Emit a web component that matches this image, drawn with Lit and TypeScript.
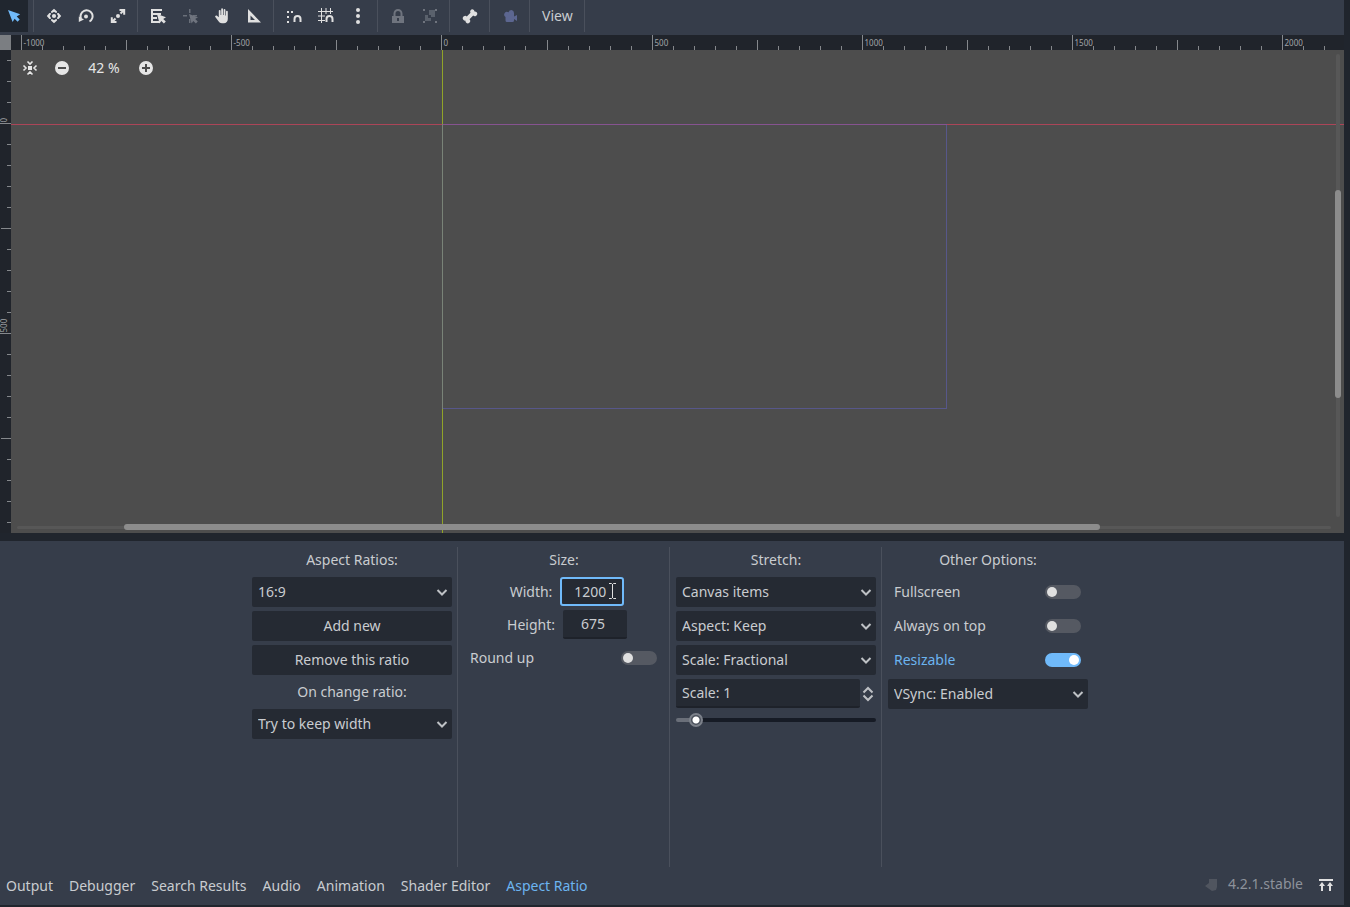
import { LitElement, html, css, svg } from "lit";
import { customElement, property, state } from "lit/decorators.js";
import { classMap } from "lit/directives/class-map.js";

const cursor = svg`<path d="M7 6 16 9.3 13.2 11 15.8 13.6 13.9 15.5 11.3 12.9 9.6 15.5z"/>`;
const magnet = svg`<path d="M8.500 14V11a3 3 0 0 1 6 0v3" fill="none" stroke="currentColor" stroke-width="2"/>`;

const icons: Record<string, unknown> = {
  select: svg`<path d="M2 2 14.2 6.3 10.7 8.6 13.7 11.6 11.6 13.7 8.6 10.7 6.6 14z"/>`,
  move: svg`<circle cx="8" cy="8" r="2.100"/><path d="M8 .8 11 3.400v1.400H9.400L8 3.800 6.600 4.800H5V3.400zM8 15.200 5 12.600v-1.400h1.600L8 12.200l1.400-1H11v1.400zM.8 8 3.400 5h1.400v1.600L3.800 8l1 1.400V11H3.400zM15.200 8 12.600 11h-1.400V9.400l1-1.400-1-1.400V5h1.400z"/>`,
  rotate: svg`<circle cx="8" cy="8.500" r="2"/><path d="M3 10.500A6 6 0 1 1 11.500 13.500" fill="none" stroke="currentColor" stroke-width="2"/><path d="M.8 8.500v5.500l5.200-2.500z"/>`,
  scale: svg`<circle cx="8" cy="8" r="2"/><path d="M9.500 2h4.700v4.700M10.500 5.500l3-3M6.500 14H1.800V9.300M5.500 10.500l-3 3" fill="none" stroke="currentColor" stroke-width="2"/>`,
  list: svg`<path d="M1 1h11v2H3v2h8v2H3v2h4v2H3v2h7v2H1z"/>${cursor}`,
  pivot: svg`<path d="M7 1h1.500v4H7zM1 7h4v1.500H1zM7 11h1.500v4H7zM11 7h4v1.200h-4z" opacity=".9"/>${cursor}`,
  hand: svg`<path d="M7.200 1.200a.9.9 0 0 1 1.800 0V7h.6V1.900a.9.9 0 0 1 1.800 0V7.400h.6V3.700a.9.9 0 0 1 1.800 0V11c0 2.600-1.600 4.200-4 4.200H8c-1.700 0-2.700-.7-3.500-2L1.300 8.900c-.6-1 .7-2 1.700-1.200L4.800 9.200V2.800a.9.9 0 0 1 1.800 0V7h.6z"/>`,
  ruler: svg`<path fill-rule="evenodd" d="M2 1v13.500h13zM4.500 7.500 9 12H4.500z"/>`,
  snap: svg`<path d="M1 3h2v2H1zM5 3h2v2H5zM1 8h2v2H1zM1 13h2v2H1z"/>${magnet}`,
  grid: svg`<path d="M3.500 0v15M8 0v6M12.500 0v6M0 3.500h15M0 8h7M0 12.500h7" fill="none" stroke="currentColor"/>${magnet}`,
  dots: svg`<circle cx="8" cy="2" r="2"/><circle cx="8" cy="8" r="2"/><circle cx="8" cy="14" r="2"/>`,
  lock: svg`<path fill-rule="evenodd" d="M2 8h1.500V5.500a4.500 4.500 0 0 1 9 0V8H14v7H2zM5.500 8h5V5.500a2.500 2.500 0 0 0-5 0zM7 10v3h2v-3z"/>`,
  group: svg`<path d="M1 1h2v2H1zM13 1h2v2h-2zM1 13h2v2H1zM13 13h2v2h-2z"/><path d="M7 2h6v7H9V7H7zM3 7h3v3h3v3H3z" opacity=".65"/>`,
  bone: svg`<path d="M10.500 1.200a2.400 2.400 0 0 0-2 3.600L4.800 8.500a2.400 2.400 0 1 0-1.300 4.100 2.400 2.400 0 1 0 4-1.300l3.700-3.700a2.400 2.400 0 1 0 1.300-4.100 2.400 2.400 0 0 0-2-2.300z"/>`,
  camera: svg`<path d="M9.500 2a3 3 0 0 0-2.900 2.300A2.700 2.700 0 1 0 3.500 9v3.500A1.500 1.500 0 0 0 5 14h5.500a1.500 1.500 0 0 0 1.500-1.500V11l3 2V7l-3 1.500V5A3 3 0 0 0 9.500 2z"/>`,
  center: svg`<path d="M6 6h4v4H6z"/><path d="M5.500 1.500 8 4l2.500-2.500M5.500 14.500 8 12l2.500 2.500M1.500 5.500 4 8l-2.500 2.500M14.500 5.500 12 8l2.500 2.500" fill="none" stroke="currentColor" stroke-width="1.600"/>`,
  minus: svg`<path fill-rule="evenodd" d="M8 1a7 7 0 1 0 0 14A7 7 0 1 0 8 1zM4 7h8v2H4z"/>`,
  plus: svg`<path fill-rule="evenodd" d="M8 1a7 7 0 1 0 0 14A7 7 0 1 0 8 1zM7 4h2v3h3v2H9v3H7V9H4V7h3z"/>`,
  spinner: svg`<path d="M3.500 6.500 8 2l4.500 4.500M3.500 9.500 8 14l4.500-4.500" fill="none" stroke="currentColor" stroke-width="2"/>`,
  chevron: svg`<path d="M3.500 6 8 10.500 12.500 6" fill="none" stroke="currentColor" stroke-width="2"/>`,
  update: svg`<path d="M6 2h8v8l-1 3-4 1-7-5 4-3z"/>`,
  expand: svg`<path d="M1 2h14v2H1zM4 5l3 4H5v5H3V9H1zM12 5l3 4h-2v5h-2V9H9z"/>`,
};

const icon = (name: string) =>
  html`<svg class="icon" width="16" height="16" viewBox="0 0 16 16" fill="currentColor" aria-hidden="true">${icons[name]}</svg>`;

/** Canvas pixels per scene unit at the 42 % zoom step. */
const ZOOM = Math.pow(2, -1.25);

const base = css`
  :host, * { box-sizing: border-box; }
  button, input, select { font: inherit; color: inherit; margin: 0; border: 0; border-radius: 0; outline: none; }
  button { background: none; padding: 0; cursor: default; }
  .icon { display: block; flex: none; }
`;

interface Tool { name: string; label: string; look?: string }

@customElement("editor-toolbar")
export class EditorToolbar extends LitElement {
  static styles = [base, css`
    :host { display: flex; gap: 4px; height: 35px; padding-bottom: 3px; background: #363d4a; overflow: hidden; }
    .tool { flex: none; width: 28px; display: grid; place-items: center; color: #e0e0e0; }
    .active { background: #20262f; color: #70bafa; }
    .dim { color: #6f747e; }
    .camera { color: #5c6690; }
    .rule { flex: none; width: 4px; padding-left: 1px; }
    .rule::before { content: ""; display: block; width: 1px; height: 100%; background: #4a505c; }
    .view { padding: 0 6px; }
  `];

  private groups: Tool[][] = [
    [{ name: "select", label: "Select mode", look: "active" }],
    [{ name: "move", label: "Move mode" }, { name: "rotate", label: "Rotate mode" }, { name: "scale", label: "Scale mode" }],
    [{ name: "list", label: "List selectable nodes" }, { name: "pivot", label: "Change pivot", look: "dim" }, { name: "hand", label: "Pan mode" }, { name: "ruler", label: "Ruler mode" }],
    [{ name: "snap", label: "Smart snap" }, { name: "grid", label: "Grid snap" }, { name: "dots", label: "Snapping options" }],
    [{ name: "lock", label: "Lock", look: "dim" }, { name: "group", label: "Group", look: "dim" }],
    [{ name: "bone", label: "Skeleton options" }],
    [{ name: "camera", label: "Override camera", look: "camera" }],
  ];

  render() {
    return html`
      ${this.groups.map(g => html`
        ${g.map(t => html`<button class="tool ${t.look ?? ""}" aria-label=${t.label}>${icon(t.name)}</button>`)}
        <span class="rule"></span>`)}
      <button class="view">View</button><span class="rule"></span>`;
  }
}

@customElement("canvas-view")
export class CanvasView extends LitElement {
  @state() private extent = { width: 0, height: 0 };
  private observer = new ResizeObserver(([entry]) => {
    const { width, height } = entry.contentRect;
    this.extent = { width: width - 11, height: height - 15 };
  });

  static styles = [base, css`
    :host { display: grid; grid-template: 15px minmax(0, 1fr) / 11px minmax(0, 1fr); }
    .corner { background: #7b7e82; }
    .ruler { background: #20242b; overflow: hidden; display: grid; }
    .ruler svg { display: block; width: 100%; height: 100%; min-height: 0; }
    .side { contain: size; }
    .ruler line { stroke: #85888c; }
    .ruler text { fill: #a2a4a8; font-size: 8px; }
    .stage { position: relative; background: #4d4d4d; overflow: hidden; }
    .scene { position: absolute; inset: 0; width: 100%; height: 100%; }
    .x-axis { stroke: #ab4558; }
    .y-axis { stroke: #90a428; }
    .frame { fill: none; stroke: #6262c8; stroke-opacity: .5; }
    .zoom { position: absolute; left: 5px; top: 4px; display: flex; gap: 4px; color: #e6e6e6; }
    .zoom button { width: 28px; height: 28px; display: grid; place-items: center; }
    .zoom .level { width: 48px; height: 28px; }
    .track { position: absolute; background: #575757; border-radius: 2px; }
    .thumb { position: absolute; background: #8c8c8c; border-radius: 3px; }
    .h-track { left: 6px; right: 13px; bottom: 4px; height: 3px; }
    .h-thumb { left: 8.5%; right: 18.3%; bottom: 3px; height: 6px; }
    .v-track { top: 4px; bottom: 16px; right: 4px; width: 4px; }
    .v-thumb { top: 29%; bottom: 28%; right: 3px; width: 6px; }
  `];

  connectedCallback() {
    super.connectedCallback();
    this.observer.observe(this);
  }

  disconnectedCallback() {
    super.disconnectedCallback();
    this.observer.disconnect();
  }

  private marks(origin: number, size: number) {
    const out: { at: number; value: number; len: number }[] = [];
    for (let value = Math.ceil(-origin / ZOOM / 50) * 50; value * ZOOM + origin < size; value += 50) {
      const len = value % 500 === 0 ? 15 : value % 250 === 0 ? 10 : 4;
      out.push({ at: Math.floor(origin + value * ZOOM) + 0.5, value, len });
    }
    return out;
  }

  render() {
    const { width, height } = this.extent;
    return html`
      <div class="corner"></div>
      <div class="ruler"><svg>
        ${this.marks(430.9, width).map(m => svg`
          <line x1=${m.at} x2=${m.at} y1=${15 - m.len} y2="15"/>
          ${m.len === 15 && m.at < width - 24 ? svg`<text x=${m.at + 2} y="11">${m.value}</text>` : null}`)}
      </svg></div>
      <div class="ruler side"><svg>
        ${this.marks(73.3, height).map(m => svg`
          <line y1=${m.at} y2=${m.at} x1=${11 - m.len} x2="11"/>
          ${m.len === 15 ? svg`<text transform="translate(7 ${m.at - 1}) rotate(-90)">${m.value}</text>` : null}`)}
      </svg></div>
      <div class="stage">
        <svg class="scene">
          <line class="x-axis" x1="0" x2="100%" y1="74.5" y2="74.5"/>
          <line class="y-axis" x1="431.5" x2="431.5" y1="0" y2="100%"/>
          <rect class="frame" x="431.5" y="74.5" width="504" height="284"/>
        </svg>
        <div class="zoom">
          <button aria-label="Center view">${icon("center")}</button>
          <button aria-label="Zoom out">${icon("minus")}</button>
          <button class="level">42 %</button>
          <button aria-label="Zoom in">${icon("plus")}</button>
        </div>
        <div class="track h-track"></div><div class="thumb h-thumb"></div>
        <div class="track v-track"></div><div class="thumb v-thumb"></div>
      </div>`;
  }
}

@customElement("option-button")
export class OptionButton extends LitElement {
  @property() label = "";
  @property({ type: Array }) options: string[] = [];

  static styles = [base, css`
    :host { display: grid; height: 30px; align-items: center; justify-items: end; }
    select { grid-area: 1 / 1; width: 100%; height: 30px; padding: 0 24px 0 6px; appearance: none; background: #252a33; border-radius: 2px; }
    .icon { grid-area: 1 / 1; margin-right: 2px; pointer-events: none; color: #bec1c5; }
  `];

  render() {
    return html`<select aria-label=${this.label}>${this.options.map(o => html`<option>${o}</option>`)}</select>${icon("chevron")}`;
  }
}

@customElement("toggle-row")
export class ToggleRow extends LitElement {
  @property() label = "";
  @property({ type: Boolean }) checked = false;

  static styles = [base, css`
    :host { display: block; }
    label { display: flex; align-items: center; justify-content: space-between; height: 30px; padding: 0 7px 0 6px; }
    .on { color: #6cb4f0; }
    input { appearance: none; width: 36px; height: 14px; border-radius: 7px; padding: 2px; display: flex; background: #555962; }
    input::before { content: ""; width: 10px; height: 10px; border-radius: 5px; background: #e0e0e0; }
    input:checked { background: #70bafa; justify-content: flex-end; }
    input:checked::before { background: #fff; }
  `];

  render() {
    return html`<label class=${classMap({ on: this.checked })}>${this.label}
      <input type="checkbox" role="switch" .checked=${this.checked}
        @change=${(e: Event) => (this.checked = (e.target as HTMLInputElement).checked)}></label>`;
  }
}

@customElement("aspect-panel")
export class AspectPanel extends LitElement {
  @state() private tab = "Aspect Ratio";
  private tabs = ["Output", "Debugger", "Search Results", "Audio", "Animation", "Shader Editor", "Aspect Ratio"];

  static styles = [base, css`
    :host { display: flex; flex-direction: column; gap: 4px; padding: 6px 4px 4px 0; background: #363d4a; }
    .columns { display: flex; justify-content: center; gap: 4px; min-height: 320px; }
    .column { width: 200px; display: flex; flex-direction: column; gap: 4px; }
    .rule { width: 4px; padding-left: 1px; }
    .rule::before { content: ""; display: block; width: 1px; height: 100%; background: #4a505c; }
    .title { height: 26px; line-height: 26px; text-align: center; }
    .wide { height: 30px; background: #252a33; border-radius: 2px; }
    .field { display: flex; justify-content: center; align-items: center; gap: 8px; padding-left: 6px; }
    .text { height: 29px; background: #252a33; border-bottom: 2px solid #1e222a; border-radius: 2px; }
    .number { width: 64px; text-align: center; padding: 0 4px 0 0; }
    .focused { border: 2px solid #70bafa; border-radius: 3px; }
    .box { position: relative; display: flex; }
    .beam { position: absolute; right: 8px; top: 5px; color: #e0e0e0; pointer-events: none; }
    .spin { display: flex; align-items: center; }
    .spin .text { flex: 1; min-width: 0; padding: 0 6px; }
    .spin button { width: 16px; display: grid; place-items: center; color: #bec1c5; }
    .slider { appearance: none; width: 100%; height: 16px; background: none; }
    .slider::-webkit-slider-runnable-track { height: 4px; border-radius: 2px; background: linear-gradient(90deg, #6a6f79 20px, #161b25 20px); }
    .slider::-webkit-slider-thumb { appearance: none; width: 14px; height: 14px; margin-top: -5px; border-radius: 7px; border: 2px solid #7c818a; background: radial-gradient(circle, #fff 3px, #4a505b 4px); }
    .bar { display: flex; gap: 4px; height: 30px; align-items: center; }
    .tab { padding: 0 6px; height: 30px; white-space: nowrap; }
    .current { color: #6cb4f0; }
    .status { margin-left: auto; display: flex; align-items: center; gap: 9px; height: 28px; align-self: flex-start; color: #8d929b; }
    .status .icon { color: #50555f; }
    .status button { width: 28px; display: grid; place-items: center; }
    .status button .icon { color: #e0e0e0; }
    .status .version { padding-bottom: 2px; }
  `];

  render() {
    return html`
      <div class="columns">
        <section class="column">
          <div class="title">Aspect Ratios:</div>
          <option-button label="Aspect ratio" .options=${["16:9"]}></option-button>
          <button class="wide">Add new</button>
          <button class="wide">Remove this ratio</button>
          <div class="title">On change ratio:</div>
          <option-button label="On change ratio" .options=${["Try to keep width"]}></option-button>
        </section>
        <span class="rule"></span>
        <section class="column">
          <div class="title">Size:</div>
          <div class="field"><label for="width">Width:</label>
            <span class="box"><input id="width" class="text number focused" value="1200">
              <svg class="beam" width="7" height="18" viewBox="0 0 7 18" fill="none" stroke="currentColor" aria-hidden="true"><path d="M0 1.500h2.500l1 1 1-1H7M3.500 2v14M0 16.500h2.500l1-1 1 1H7"/></svg></span>
          </div>
          <div class="field"><label for="height">Height:</label><input id="height" class="text number" value="675"></div>
          <toggle-row label="Round up"></toggle-row>
        </section>
        <span class="rule"></span>
        <section class="column">
          <div class="title">Stretch:</div>
          <option-button label="Stretch mode" .options=${["Canvas items"]}></option-button>
          <option-button label="Stretch aspect" .options=${["Aspect: Keep"]}></option-button>
          <option-button label="Scale mode" .options=${["Scale: Fractional"]}></option-button>
          <div class="spin"><input class="text" aria-label="Scale" value="Scale: 1"><button aria-label="Step scale">${icon("spinner")}</button></div>
          <input class="slider" type="range" aria-label="Scale" min="0" max="100" value="7">
        </section>
        <span class="rule"></span>
        <section class="column">
          <div class="title">Other Options:</div>
          <toggle-row label="Fullscreen"></toggle-row>
          <toggle-row label="Always on top"></toggle-row>
          <toggle-row label="Resizable" checked></toggle-row>
          <option-button label="VSync" .options=${["VSync: Enabled"]}></option-button>
        </section>
      </div>
      <nav class="bar">
        ${this.tabs.map(t => html`<button class=${classMap({ tab: true, current: t === this.tab })} @click=${() => (this.tab = t)}>${t}</button>`)}
        <div class="status">${icon("update")}<span class="version">4.2.1.stable</span>
          <button aria-label="Expand bottom panel">${icon("expand")}</button></div>
      </nav>`;
  }
}

@customElement("app-root")
export class AppRoot extends LitElement {
  static styles = css`
    :host { display: flex; flex-direction: column; box-sizing: border-box; height: 100vh; padding: 0 6px 2px 0; background: #20252d; color: #c9ccd0; font: 14px/20px "Noto Sans", sans-serif; overflow: hidden; }
    editor-toolbar, aspect-panel { flex: none; }
    canvas-view { flex: 1; min-height: 0; margin-bottom: 8px; }
  `;

  render() {
    return html`<editor-toolbar></editor-toolbar><canvas-view></canvas-view><aspect-panel></aspect-panel>`;
  }
}
